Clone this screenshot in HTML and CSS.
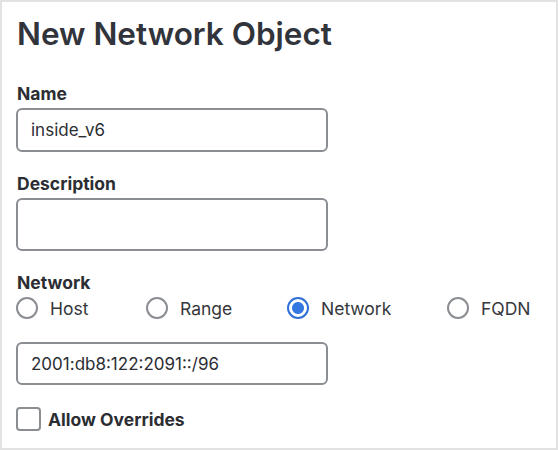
FILE: index.html
```html
<!DOCTYPE html>
<html lang="en">
<head>
    <meta charset="UTF-8">
    <title>New Network Object</title>
    <link rel="stylesheet" href="styles.css">
</head>
<body>
    <div class="panel">
        <h1>New Network Object</h1>

        <div class="field">
            <label class="label" for="name">Name</label>
            <input class="text-input" id="name" type="text" value="inside_v6">
        </div>

        <div class="field">
            <label class="label" for="desc">Description</label>
            <textarea class="text-input desc" id="desc"></textarea>
        </div>

        <div class="field">
            <span class="label tight">Network</span>
            <div class="radios">
                <label class="radio"><span class="dot"></span>Host</label>
                <label class="radio"><span class="dot"></span>Range</label>
                <label class="radio checked"><span class="dot"></span>Network</label>
                <label class="radio"><span class="dot"></span>FQDN</label>
            </div>
        </div>

        <input class="text-input net" type="text" value="2001:db8:122:2091::/96">

        <label class="check"><span class="box"></span>Allow Overrides</label>
    </div>
</body>
</html>
```

FILE: styles.css
```css
* {
    box-sizing: border-box;
}
body {
    margin: 0;
    font-family: Inter, "Liberation Sans", Arial, sans-serif;
    color: #2b2d33;
    background: #fff;
}
.panel {
    width: 558px;
    height: 450px;
    border: 2px solid #e2e2e2;
    padding: 12px 14px 0 14px;
}
h1 {
    margin: 0 0 30px 1px;
    font-family: Inter, sans-serif;
    font-size: 31.5px;
    font-weight: 600;
    color: #31343b;
    line-height: 40px;
}
.field {
    margin-bottom: 22px;
}
.label {
    display: block;
    font-size: 17.5px;
    font-weight: 700;
    margin-left: 1px;
    margin-bottom: 4px;
    line-height: 20px;
}
.label.tight {
    margin-bottom: 3px;
}
.text-input {
    display: block;
    width: 312px;
    height: 44px;
    border: 2px solid #8a8d92;
    border-radius: 6px;
    padding: 0 13px;
    font-family: Inter, "Liberation Sans", Arial, sans-serif;
    font-size: 17px;
    color: #2b2d33;
    background: #fff;
    outline: none;
}
.desc {
    height: 53px;
    resize: none;
}
.radios {
    display: flex;
}
.radio {
    display: flex;
    align-items: center;
    gap: 12px;
    font-size: 17.5px;
    color: #35373c;
    height: 24px;
}
.radio:nth-child(1) { width: 130px; }
.radio:nth-child(2) { width: 141px; }
.radio:nth-child(3) { width: 160px; }
.dot {
    width: 22px;
    height: 22px;
    border: 2px solid #8a8d92;
    border-radius: 50%;
    background: #fff;
}
.checked .dot {
    border-color: #2f6fd8;
    background: radial-gradient(circle, #3577e0 0 5.5px, #fff 6.5px);
}
.net {
    height: 43px;
    margin-top: 1px;
}
.check {
    display: flex;
    align-items: center;
    gap: 7px;
    margin-top: 22px;
    font-size: 17.5px;
    font-weight: 700;
}
.box {
    width: 25px;
    height: 24px;
    border: 2px solid #8a8d92;
    border-radius: 4px;
}
```
